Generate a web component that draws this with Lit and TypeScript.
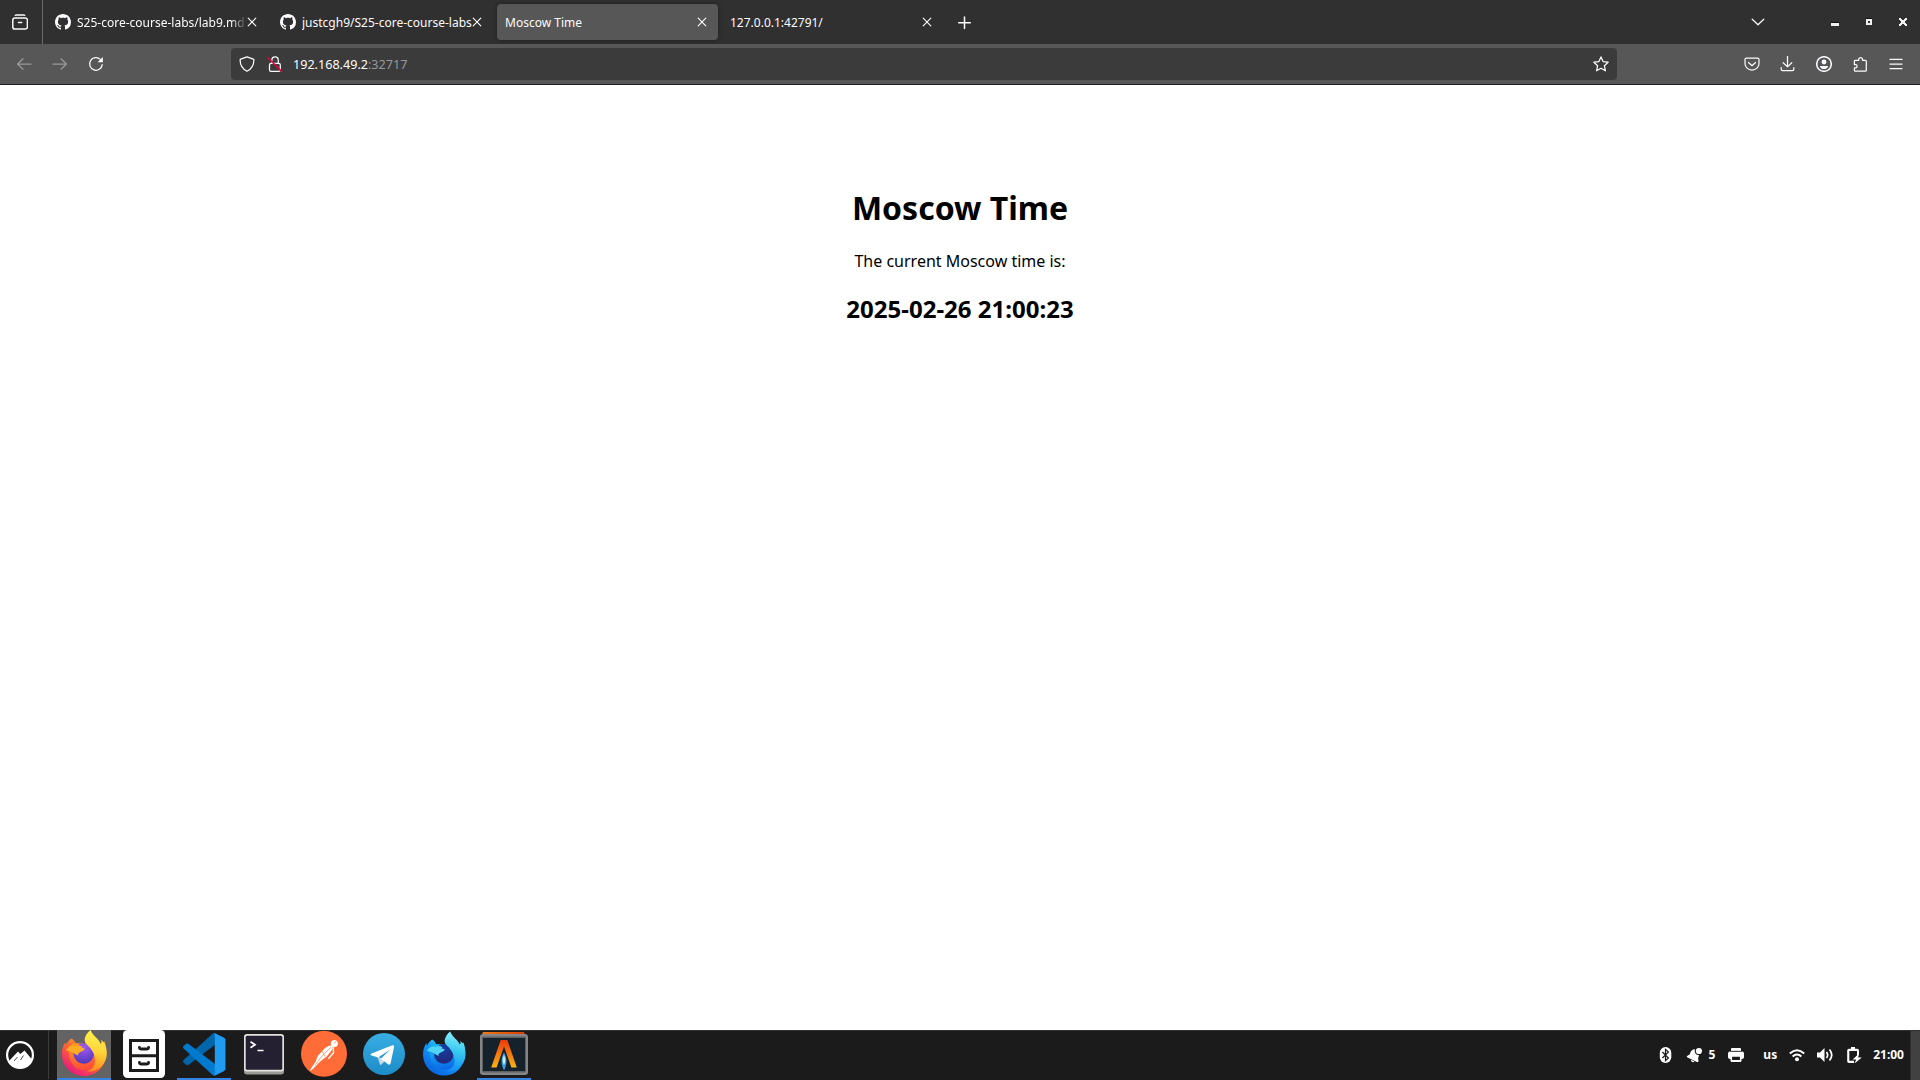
import { LitElement, html, css, svg } from "lit";
import { customElement, property } from "lit/decorators.js";

const github = html`<svg class="i16" viewBox="0 0 16 16" fill="#fbfbfe"><path d="M8 0C3.58 0 0 3.58 0 8c0 3.54 2.29 6.53 5.47 7.59.4.07.55-.17.55-.38 0-.19-.01-.82-.01-1.49-2.01.37-2.53-.49-2.69-.94-.09-.23-.48-.94-.82-1.13-.28-.15-.68-.52-.01-.53.63-.01 1.08.58 1.23.82.72 1.21 1.87.87 2.33.66.07-.52.28-.87.51-1.07-1.78-.2-3.64-.89-3.64-3.95 0-.87.31-1.59.82-2.15-.08-.2-.36-1.02.08-2.12 0 0 .67-.21 2.2.82.64-.18 1.32-.27 2-.27s1.36.09 2 .27c1.53-1.04 2.2-.82 2.2-.82.44 1.1.16 1.92.08 2.12.51.56.82 1.27.82 2.15 0 3.07-1.87 3.75-3.65 3.95.29.25.54.73.54 1.48 0 1.07-.01 1.93-.01 2.2 0 .21.15.46.55.38A8.01 8.01 0 0 0 16 8c0-4.42-3.58-8-8-8z"/></svg>`;

const line = (body: unknown, extra = "") =>
  html`<svg class="i16 line ${extra}" viewBox="0 0 16 16">${body}</svg>`;

const icons = {
  view: line(svg`<path d="M3.300 1.300Q3.700.9 4.500.9h7q.8 0 1.200.4"/><rect x=".8" y="3.900" width="14.600" height="11.200" rx="2.200"/><path d="M6.500 8.500h3.200"/>`, "bold"),
  back: line(svg`<path d="M15 8H1.800M7 2.800 1.600 8 7 13.200"/>`, "dim"),
  forward: line(svg`<path d="M1 8h13.200M9 2.800 14.400 8 9 13.200"/>`, "dim"),
  reload: line(svg`<path d="M14.200 8.600a6.300 6.300 0 1 1-1.900-5.200"/><path d="M14.900.9v5.300H9.600z" fill="#fbfbfe" stroke="none"/>`),
  shield: line(svg`<path d="M8 .8 14.300 3.200c.5.200.6.500.6.900-.1 5-2.200 9-6.900 11.200C3.300 13.100 1.200 9.100 1.100 4.100c0-.4.1-.7.6-.9z"/>`),
  lock: line(svg`<rect x="2.500" y="7.300" width="10.800" height="8" rx="1.600"/><path d="M4.800 7.300V4.400a3.200 3.500 0 0 1 6.500 0v2.900"/><path d="M1.200 2 14.600 15.400" stroke="#e6003d" stroke-width="1.500"/>`),
  star: line(svg`<path d="m8 .9 2.100 4.700 5 .6-3.700 3.500 1 5.100L8 12.300l-4.400 2.500 1-5.100L.9 6.200l5-.6z"/>`),
  pocket: line(svg`<path d="M2.300 2.100h11.400c.8 0 1.300.5 1.300 1.300V7.500a7 6.600 0 0 1-14 0V3.400c0-.8.5-1.300 1.300-1.300z"/><path d="m4.500 6.500 3.500 3.200 3.500-3.200"/>`),
  download: line(svg`<path d="M7.500.3v10.400M3.200 6.700 7.500 10.900l4.300-4.200M1.200 11.600v1.600c0 .9.500 1.400 1.400 1.400h9.800c.9 0 1.400-.5 1.400-1.400v-1.600"/>`),
  account: line(svg`<circle cx="8" cy="8" r="7.300"/><circle cx="8" cy="6" r="2.400" fill="#fbfbfe" stroke="none"/><path d="M3.900 9.900h8.200c-.2 1.900-1.900 3.200-4.100 3.200s-3.900-1.300-4.100-3.200z" fill="#fbfbfe" stroke="none"/>`, "bold"),
  puzzle: line(svg`<path d="M2.400 8.700V5.100c0-.5.300-.8.800-.8h3.500V2.900a2 2 0 0 1 3.800 0v1.400h2.900c.6 0 .9.300.9.900v9.100c0 .6-.3.900-.9.900H3.300c-.6 0-.9-.3-.9-.9v-2.500h1.500a1.600 1.600 0 0 0 0-3.100z"/>`),
  menu: line(svg`<path d="M2 3.400h12M2 8h12M2 12.600h12"/>`),
  chevron: line(svg`<path d="m2.200 5.200 5.800 5.600 5.800-5.600"/>`),
  plus: line(svg`<path d="M8.500 3v11.500M2.700 8.700h11.600" stroke-width="1.500"/>`),
  close: html`<svg class="x line" viewBox="0 0 10 10"><path d="M1.200 1.200l7.600 7.600M8.800 1.200 1.200 8.800" stroke-width="1.150"/></svg>`,
};

const fox = (p: { id: string; outer: string[]; body: string[]; globe: string[]; tail: string[]; head: string }) => svg`
  <defs>
    <linearGradient id="${p.id}a" x1=".85" y1=".1" x2=".2" y2=".95"><stop offset="0" stop-color=${p.outer[0]}/><stop offset=".45" stop-color=${p.outer[1]}/><stop offset="1" stop-color=${p.outer[2]}/></linearGradient>
    <linearGradient id="${p.id}b" x1=".3" y1="0" x2=".5" y2="1"><stop offset="0" stop-color=${p.body[0]}/><stop offset="1" stop-color=${p.body[1]}/></linearGradient>
    <radialGradient id="${p.id}c" cx=".5" cy=".2" r=".8"><stop offset="0" stop-color=${p.globe[0]}/><stop offset="1" stop-color=${p.globe[1]}/></radialGradient>
    <linearGradient id="${p.id}d" x1=".5" y1="0" x2=".4" y2="1"><stop offset="0" stop-color=${p.tail[0]}/><stop offset=".5" stop-color=${p.tail[1]}/><stop offset="1" stop-color=${p.tail[2]}/></linearGradient>
  </defs>
  <path fill="url(#${p.id}a)" d="M14.500 8.500c1.800 1 3.200 2.700 4 4.500l22 2 7-3.500c1.600 4 2.200 8 1.800 12.500C48.500 37 39 46 27.500 46 15 46 5.300 37 4.800 24.500c-.1-5 1.300-9.300 3.600-12.500l.5 3.200c1.300-2.900 3.200-5.100 5.600-6.700z"/>
  <path fill="url(#${p.id}b)" d="M12 17c3.500-4 7-4 10-3l14 4c5 5 6 13 1 18.500-5 5-14.500 5-19.500 0C13 32 11 24 12 17z"/>
  <circle cx="26.800" cy="23.500" r="10.300" fill="url(#${p.id}c)"/>
  <path fill="url(#${p.id}d)" d="M33.500 0c1.500 3.800 4.500 6.500 7 9 1.800 2 3 4 3.400 6 .7-1.500.8-3.500.3-5.200 4.200 3.800 6.600 11 5.100 17.900C47 37 38 42.500 29.500 41.500c7-2 9.500-7.500 8.300-13.500-.8-5-3-8-5-10.500-2.800-3-5.500-4.500-5.100-8.500C28.300 5.600 30.500 2.400 33.500 0z"/>
  <path fill=${p.head} d="M8.800 20.500c2-3.800 5-5.500 9.700-4.500 1.800-1.200 4.500-1.200 7 .8l-1.500.7c2 .5 3.500.8 3.700 1.600-.4 1.500-3 2.400-5.200 3.300-1.500.8-1.500 2.200-1.400 3.200-3.800-1.300-6.500-5-12.300-5.100z"/>`;

const apps = {
  firefox: fox({ id: "f", outer: ["#ffbd30", "#ff6a2c", "#e91583"], body: ["#ff9a1f", "#ff4b3a"], globe: ["#a35bf5", "#5137b8"], tail: ["#fff44f", "#ffd43a", "#ff8a1c"], head: "#ffac25" }),
  cabinet: svg`<rect x="6" y="0" width="42" height="48" rx="4.500" fill="#fff"/><path fill="none" stroke="#1b1b1b" stroke-width="3" d="M13.500 10.500h27v30h-27zM13.500 25.700h27"/><path fill="none" stroke="#1b1b1b" stroke-width="2.800" stroke-linecap="round" stroke-linejoin="round" d="M22.400 17.400v.3q.2 1.300 1.600 1.300h6q1.400 0 1.600-1.300v-.3M22.400 32.400v.3q.2 1.300 1.600 1.300h6q1.400 0 1.600-1.300v-.3"/>`,
  code: svg`<path fill="#0065a9" d="M47 7.700 38.300 3.500c-1-.5-2.200-.3-3 .5L6.600 30.100c-.8.700-.8 1.900 0 2.600L9 34.800c.6.600 1.600.6 2.300.1L46 8.700z"/><path fill="#007acc" d="M47 41 38.300 45.200c-1 .5-2.200.3-3-.5L6.600 18.600c-.8-.7-.8-1.900 0-2.600L9 13.900c.6-.6 1.600-.6 2.300-.1L46 40z"/><path fill="#1f9cf0" d="M38.300 45.200c-1.100.500-2.300.200-3.100-.5 1 1 2.600.300 2.600-1.100V5.100c0-1.400-1.600-2.100-2.600-1.100.8-.8 2-1 3.100-.5L47 7.700c.9.400 1.500 1.300 1.500 2.400v28.500c0 1-.6 2-1.500 2.400z"/>`,
  terminal: svg`<rect x="7" y="5" width="40" height="39.500" rx="3" fill="#9c9a96"/><rect x="7" y="4" width="40" height="37.500" rx="3" fill="#e4e2df"/><rect x="8.700" y="5.700" width="36.600" height="34" rx="1.500" fill="#241f31"/><path fill="none" stroke="#fff" stroke-width="1.700" d="m13.500 11.700 4.500 3-4.500 3M20.500 20.500h6"/>`,
  postman: svg`<circle cx="27" cy="23.700" r="23" fill="#ff6c37"/><circle cx="37.300" cy="13.400" r="3.500" fill="#fff"/><path fill="#fff" d="M34.500 15.600c1.400 1 1.600 2.600.7 3.800L30 26.200l-6.500 5-9 9c-.8.700-1.600.1-1.100-.8l5.400-8.200 1.900-5.100 6.800-7.500c2.300-2.100 5-3.700 7-3z"/><path fill="none" stroke="#fff" stroke-width="1.300" d="m36.200 17 .4 5.800-5.200 6"/><path fill="none" stroke="#ff6c37" stroke-width=".6" d="m34 17.300-8.500 8-7.500 10M25 21l3 5.500"/><path fill="none" stroke="#ff6c37" stroke-width=".7" d="m36.700 13.500 2.500-2.200"/>`,
  telegram: svg`<defs><linearGradient id="t" x1="0" y1="0" x2="0" y2="1"><stop offset="0" stop-color="#38aee4"/><stop offset="1" stop-color="#1d8cc8"/></linearGradient></defs><circle cx="27" cy="24" r="21" fill="url(#t)"/><path fill="#c8daea" d="m20.500 26.500 2.600 8.300c.5.200 1 0 1.500-.5l4-4z"/><path fill="#fff" d="M14.500 23.500 35.300 15.300c1.400-.5 2 .3 1.700 1.900l-3.400 16c-.4 1.500-1.300 1.800-2.500 1.100l-7.300-5.500 9.500-9.200-12.200 8-6.400-2c-1.400-.5-1.500-1.400-.2-2.100z"/>`,
  foxDev: svg`<g transform="translate(1.500 1.500) scale(.945 .955)">${fox({ id: "d", outer: ["#54e5f5", "#159af8", "#0860df"], body: ["#14b8f5", "#0b68e8"], globe: ["#163d9e", "#22277c"], tail: ["#8af0ff", "#35c8ee", "#128df5"], head: "#50d3f4" })}</g>`,
  alacritty: svg`<defs><linearGradient id="al" x1="0" y1="0" x2="0" y2="1"><stop offset="0" stop-color="#ee3a08"/><stop offset="1" stop-color="#f9b414"/></linearGradient><linearGradient id="am" x1="0" y1="0" x2="1" y2="0"><stop offset="0" stop-color="#ef7d16"/><stop offset="1" stop-color="#dd3b07"/></linearGradient></defs><path fill="url(#am)" d="M6 2h41l2 5H4z"/><rect x="3" y="4" width="48" height="41" rx="3" fill="#858585"/><rect x="5" y="6.500" width="44" height="36" rx="1" fill="#5d6062"/><rect x="6" y="8" width="42" height="33" fill="#16222b"/><path fill="url(#al)" d="M23.700 10h6.600l9.500 27.500h-5.400L27 16.500l-7.400 21h-5.400z"/><path fill="#3c9fe8" d="M27 22.500c3.300 6 3.200 11 0 18-3.200-7-3.300-12 0-18z"/><path fill="#c6ecff" d="M27 25c1.800 3.600 1.800 6.500 0 10-1.800-3.500-1.800-6.400 0-10z"/>`,
};

const tray = {
  bluetooth: svg`<rect x="1.800" y="0" width="11.500" height="16" rx="5.700" fill="#fff"/><path fill="none" stroke="#1b1b1b" stroke-width="1.200" d="m4.400 5 6 6L7.500 13.700V2.300L10.400 5l-6 6"/>`,
  bell: svg`<g transform="translate(.6 0)"><path fill="#fff" d="M8.500 2.200C6.500 2 5 3 4.300 4.600L3 7.400.8 8.700c-.9.600-.7 1.500.2 1.900l9.300 4.300c1 .4 1.700-.1 1.600-1.100l-.4-2.700 1.100-2.900A4.200 4.200 0 0 1 8.500 2.200z"/><circle cx="12.300" cy="4" r="3.100" fill="#fff"/><path fill="#fff" d="M4.300 12.800 8 14.500c-1.300 1.500-3.700.5-3.700-1.700z"/></g>`,
  printer: svg`<path fill="#fff" d="M4 1h8q1 0 1 1v2H3V2q0-1 1-1zM2 4.500h12q2 0 2 2V10q0 2-2 2h-.500v1.500q0 1.500-1.500 1.500H4q-1.500 0-1.500-1.500V12H2q-2 0-2-2V6.500q0-2 2-2z"/><rect x="4" y="9.800" width="8" height="3.200" rx=".5" fill="#1b1b1b"/><path stroke="#1b1b1b" stroke-width=".7" d="M2.500 4.300h11"/>`,
  wifi: svg`<g fill="none" stroke="#fff" stroke-width="2"><path d="M.8 6.500q7.200-6.600 14.400 0"/><path d="M3.600 9.500q4.400-4 8.800 0"/></g><circle cx="8" cy="12.300" r="2" fill="#fff"/>`,
  volume: svg`<path fill="#fff" d="M0 5.500h3L7.500 1v14L3 10.500H0z"/><g fill="none" stroke="#fff" stroke-width="1.700"><path d="M9.500 5q2.300 3 0 6M12.500 2.500q4.500 5.500 0 11"/></g>`,
  battery: svg`<path fill="#fff" fill-rule="evenodd" d="M5 0h4v1.800h2.200q1.800 0 1.800 1.800V8l-2 1V4H3.300v9.800H8V16H3q-1.800 0-1.800-1.800V3.600q0-1.800 1.800-1.800h2z"/><path fill="#fff" d="m13 6.500-6.300 6h3.500L8.500 16.500l7.300-6h-3.600z"/>`,
};

@customElement("browser-tab")
class BrowserTab extends LitElement {
  @property() label = "";
  @property({ type: Boolean }) github = false;
  @property({ type: Boolean, reflect: true }) active = false;
  static styles = css`
    :host { display: flex; align-items: center; box-sizing: border-box; width: 221px; height: 36px; padding: 0 11px 0 8px; border-radius: 4px; flex: none; }
    :host([active]) { background: #575757; box-shadow: 0 0 4px rgba(0, 0, 0, 0.4); }
    .i16 { width: 16px; height: 16px; flex: none; margin-right: 6px; }
    .label { flex: 1; min-width: 0; overflow: hidden; white-space: nowrap; font: 12px/18px "Noto Sans", sans-serif; color: #fbfbfe; padding-top: 2px; }
    .fade { mask-image: linear-gradient(to left, transparent, #000 16px); }
    .x { width: 10px; height: 10px; flex: none; }
    .line { fill: none; stroke: #fbfbfe; stroke-linecap: round; }
  `;
  render() {
    return html`${this.github ? github : ""}<span class="label ${this.label.startsWith("S25") ? "fade" : ""}">${this.label}</span>${icons.close}`;
  }
}

@customElement("app-root")
class AppRoot extends LitElement {
  static styles = css`
    :host { display: flex; flex-direction: column; width: 1920px; height: 1080px; overflow: hidden; background: #fff; font-family: "Noto Sans", sans-serif; }
    .i16 { width: 16px; height: 16px; flex: none; display: block; }
    .line { fill: none; stroke: #fbfbfe; stroke-width: 1.25; stroke-linecap: round; stroke-linejoin: round; }
    .bold { stroke-width: 1.5; }
    .dim { opacity: 0.4; }
    .tabs { display: flex; align-items: center; height: 44px; background: #303030; flex: none; }
    .view { display: flex; align-items: center; width: 43px; height: 44px; padding-left: 12px; box-sizing: border-box; border-right: 1px solid #6b6b6b; margin-right: 4px; }
    .strip { display: flex; gap: 4px; margin-right: 13px; }
    .windows { display: flex; align-items: center; margin-left: auto; padding-right: 12px; }
    .win { display: block; width: 10px; height: 10px; margin-left: 24px; shape-rendering: crispEdges; }
    .win.first { margin-left: 64px; }
    .bar { display: flex; align-items: center; height: 40px; background: #575757; border-bottom: 1px solid #1c1b22; flex: none; }
    .nav { display: flex; gap: 20px; padding-left: 16px; width: 215px; }
    .url { display: flex; align-items: center; width: 1386px; box-sizing: border-box; height: 32px; padding: 0 8px; border-radius: 4px; background: #3b3b3b; }
    .url .lock { margin: 0 10px 0 12px; }
    .address { font-size: 12.6px; line-height: 18px; color: #fbfbfe; flex: 1; padding-top: 2px; }
    .port { color: #98989b; }
    .tools { display: flex; gap: 20.1px; margin-left: auto; padding-right: 16px; }
    .page { flex: 1; padding-top: 101px; box-sizing: border-box; text-align: center; color: #000; font-size: 16px; }
    h1 { font-size: 32px; margin: 0 0 21.44px; }
    p { margin: 0 0 19.92px; }
    h2 { font-size: 24px; margin: 0; }
    .panel { display: flex; height: 50px; box-sizing: border-box; background: #1b1b1b; box-shadow: inset 0 1px #2d312f; color: #fff; flex: none; }
    .start { display: flex; align-items: center; width: 49px; height: 49px; box-sizing: border-box; padding-left: 6px; border-right: 1px solid #3c3c3c; margin-right: 8px; }
    .start svg { width: 28px; height: 28px; }
    .dock { display: flex; gap: 6px; }
    .app { width: 54px; height: 50px; box-sizing: border-box; }
    .app svg { width: 54px; height: 50px; display: block; }
    .focused { background: #636363; }
    .running { box-shadow: inset 0 -2px #3584e4; }
    .tray { display: flex; align-items: center; margin-left: auto; font-weight: 700; font-size: 12px; line-height: 18px; }
    .count { margin: 0 13px 0 6px; }
    .layout { margin: 0 12px 0 19px; }
    .gap { width: 12px; }
    .gap.wide { width: 13px; }
    .clock { margin: 0 6px 0 11px; }
    .desk { width: 10px; height: 50px; background: #414141; box-shadow: inset 1px 1px #303030; }
  `;

  private mark(art: unknown) {
    return html`<svg class="i16" viewBox="0 0 16 16">${art}</svg>`;
  }

  private app(art: unknown, state = "") {
    return html`<div class="app ${state}"><svg viewBox="0 0 54 50">${art}</svg></div>`;
  }

  render() {
    return html`
      <div class="tabs">
        <div class="view">${icons.view}</div>
        <div class="strip">
          <browser-tab github label="S25-core-course-labs/lab9.md"></browser-tab>
          <browser-tab github label="justcgh9/S25-core-course-labs"></browser-tab>
          <browser-tab active label="Moscow Time"></browser-tab>
          <browser-tab label="127.0.0.1:42791/"></browser-tab>
        </div>
        ${icons.plus}
        <div class="windows">
          ${icons.chevron}
          <svg class="win first" viewBox="0 0 10 10"><path fill="#111" d="M1 5h8v1H1z"/><path fill="#f2f2f2" d="M1 6h8v3H1z"/></svg>
          <svg class="win" viewBox="0 0 10 10"><path fill="#111" d="M2 1h6v1H2z"/><path fill="#f2f2f2" fill-rule="evenodd" d="M2 2h6v6H2zM4 4v2h2V4z"/></svg>
          <svg class="win" viewBox="0 0 10 10"><path fill="#f2f2f2" d="M1 1h2v1h1v1h2V2h1V1h2v2H8v1H7v2h1v1h1v2H7V8H6V7H4v1H3v1H1V7h1V6h1V4H2V3H1z"/></svg>
        </div>
      </div>
      <div class="bar">
        <div class="nav">${icons.back}${icons.forward}${icons.reload}</div>
        <div class="url">
          ${icons.shield}
          <span class="lock">${icons.lock}</span>
          <span class="address">192.168.49.2<span class="port">:32717</span></span>
          ${icons.star}
        </div>
        <div class="tools">${icons.pocket}${icons.download}${icons.account}${icons.puzzle}${icons.menu}</div>
      </div>
      <div class="page">
        <h1>Moscow Time</h1>
        <p>The current Moscow time is:</p>
        <h2>2025-02-26 21:00:23</h2>
      </div>
      <div class="panel">
        <div class="start"><svg viewBox="0 0 28 28"><circle cx="14" cy="14" r="12.900" fill="none" stroke="#fff" stroke-width="2.200"/><path fill="#fff" d="m3 20 9-9.500 2.300 2.500L18.500 9.500 26 18.500a12.900 12.900 0 0 1-22 3.500z"/><path stroke="#1b1b1b" stroke-width=".8" fill="none" d="m8 20 3.500-4M14.500 19l3-4.500"/></svg></div>
        <div class="dock">
          ${this.app(apps.firefox, "focused running")}
          ${this.app(apps.cabinet)}
          ${this.app(apps.code, "running")}
          ${this.app(apps.terminal)}
          ${this.app(apps.postman)}
          ${this.app(apps.telegram)}
          ${this.app(apps.foxDev)}
          ${this.app(apps.alacritty, "running")}
        </div>
        <div class="tray">
          ${this.mark(tray.bluetooth)}<span class="gap"></span>
          ${this.mark(tray.bell)}<span class="count">5</span>
          ${this.mark(tray.printer)}<span class="layout">us</span>
          ${this.mark(tray.wifi)}<span class="gap"></span>
          ${this.mark(tray.volume)}<span class="gap wide"></span>
          ${this.mark(tray.battery)}<span class="clock">21:00</span>
          <div class="desk"></div>
        </div>
      </div>
    `;
  }
}
